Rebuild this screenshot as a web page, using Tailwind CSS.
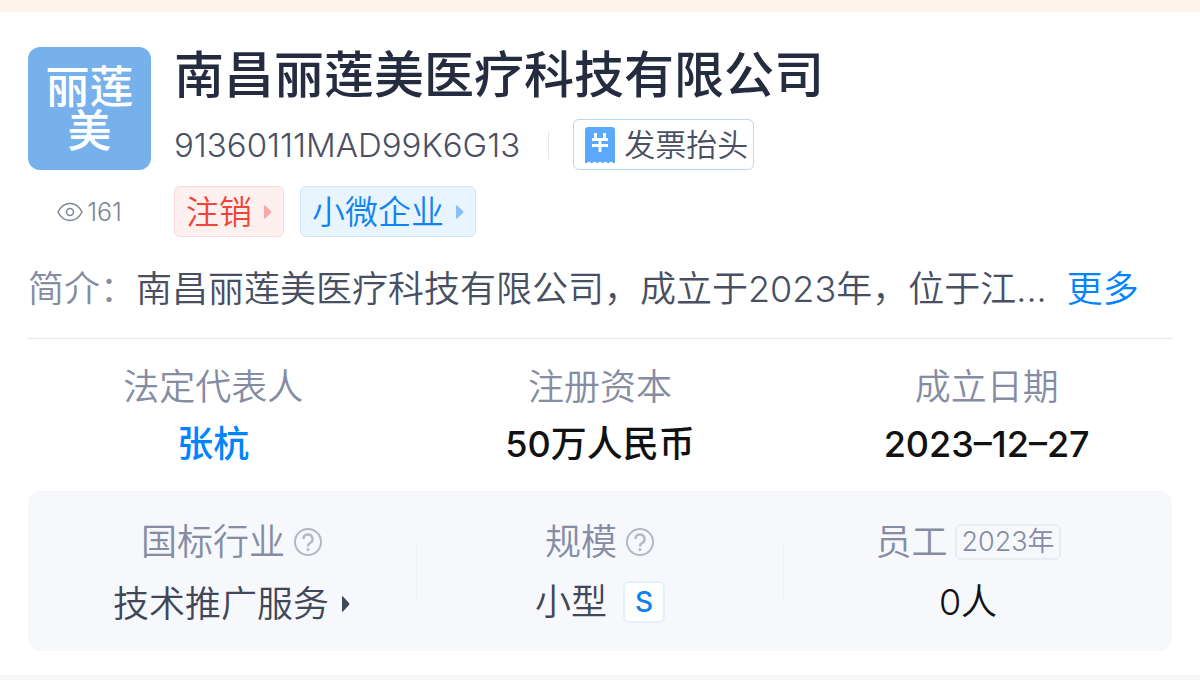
<!DOCTYPE html>
<html lang="zh-CN">
  <head>
    <meta charset="UTF-8" />
    <meta name="viewport" content="width=device-width, initial-scale=1.0" />
    <title>南昌丽莲美医疗科技有限公司</title>
    <script src="https://cdn.jsdelivr.net/npm/@tailwindcss/browser@4"></script>
  </head>
  <body class="min-h-screen bg-[#f7f7f8] font-['Inter','Noto_Sans_CJK_SC',sans-serif] font-[350]">
    <div class="h-3 bg-[#fff3ea]"></div>

    <main class="bg-white px-7 pt-[35px] pb-6">
      <!-- Company header -->
      <header class="flex gap-[23px]">
        <div class="flex shrink-0 flex-col items-center">
          <div
            class="flex size-[123px] items-center justify-center rounded-xl bg-[#76b1ec] px-4 text-center text-[44px] leading-[44px] font-medium text-white"
          >
            丽莲美
          </div>
          <div class="mt-6 flex items-center gap-1 text-[25px] leading-9 text-[#7d8596]">
            <svg class="h-5 w-[26px]" viewBox="0 0 26 20" fill="none" stroke="currentColor" stroke-width="1.5">
              <path d="M1 10C4 4 8.500 1.500 13 1.500S22 4 25 10C22 16 17.500 18.500 13 18.500S4 16 1 10Z" />
              <circle cx="13" cy="10" r="3.500" />
            </svg>
            <span>161</span>
          </div>
        </div>

        <div class="min-w-0">
          <h1 class="text-[50px] leading-[56px] font-medium text-[#262c3f]">
            南昌丽莲美医疗科技有限公司
          </h1>

          <div class="mt-4 flex items-center">
            <span class="text-[33px] leading-[50px] text-[#4a5062]">91360111MAD99K6G13</span>
            <span class="mr-6 ml-7 h-7 w-px bg-[#e6e8ee]"></span>
            <button
              type="button"
              class="flex h-[51px] items-center gap-2 rounded-md border border-[#b4daf5] pr-[5px] pl-[10px] text-[31px] font-[350] text-[#4a5062]"
            >
              <svg class="h-9 w-8" viewBox="0 0 32 36">
                <path
                  d="M4 0H28Q31 0 31 3V36H29A2.200 2.200 0 0 0 25 36H23.500A2.200 2.200 0 0 0 19.500 36H18A2.200 2.200 0 0 0 14 36H12.500A2.200 2.200 0 0 0 8.500 36H7A2.200 2.200 0 0 0 3 36H1V3Q1 0 4 0Z"
                  fill="#5aa9fb"
                />
                <path d="M11.500 6V12.500M20.500 6V12.500M8 12.500H24M8 18.500H24M16 12.500V25" fill="none" stroke="#fff" stroke-width="2.800" />
              </svg>
              <span class="pt-[2px]">发票抬头</span>
            </button>
          </div>

          <div class="mt-4 flex gap-4">
            <a href="#" class="flex h-[51px] items-center gap-3 rounded-md border border-[#fbd9da] bg-[#fff0f0] px-[11px] text-[33px] text-[#f04438]">
              <span class="pt-[2px]">注销</span>
              <svg class="h-[14px] w-2" viewBox="0 0 8 14" fill="#f7a8a8">
                <path d="M0 1Q0 0 1 .5L7 6Q8 7 7 8L1 13.500Q0 14 0 13Z" />
              </svg>
            </a>
            <a href="#" class="flex h-[51px] items-center gap-3 rounded-md border border-[#cfe6f8] bg-[#e8f4fe] px-[11px] text-[33px] text-[#0f84f0]">
              <span class="pt-[2px]">小微企业</span>
              <svg class="h-[14px] w-2" viewBox="0 0 8 14" fill="#83c1f7">
                <path d="M0 1Q0 0 1 .5L7 6Q8 7 7 8L1 13.500Q0 14 0 13Z" />
              </svg>
            </a>
          </div>
        </div>
      </header>

      <!-- Introduction -->
      <div class="mt-[26px] flex border-b border-[#e6e7ea] pb-[23px] text-[36px] leading-[52px] whitespace-nowrap">
        <span class="text-[#858ca3]">简介：</span>
        <p class="text-[#484f62]">南昌丽莲美医疗科技有限公司，成立于2023年，位于江...</p>
        <button type="button" class="ml-5 font-[350] text-[#0084ff]">更多</button>
      </div>

      <!-- Registration facts -->
      <dl class="-mx-2 mt-5 grid grid-cols-3 text-center text-[36px] leading-[57px]">
        <div>
          <dt class="text-[#858ca3]">法定代表人</dt>
          <dd class="font-medium"><a href="#" class="text-[#0084ff]">张杭</a></dd>
        </div>
        <div>
          <dt class="text-[#858ca3]">注册资本</dt>
          <dd class="font-medium text-[#111]">50万人民币</dd>
        </div>
        <div>
          <dt class="text-[#858ca3]">成立日期</dt>
          <dd class="font-medium text-[#111]">2023–12–27</dd>
        </div>
      </dl>

      <!-- Industry, size and staff -->
      <dl class="mt-[18px] grid grid-cols-3 rounded-xl bg-[#f6f8fc] px-5 pt-[21px] pb-[17px] text-[36px] leading-[60px]">
        <div>
          <dt class="flex items-center justify-center gap-2 text-[#858ca3]">
            国标行业
            <svg class="size-[30px]" viewBox="0 0 30 30" fill="none" stroke="#b4b8c2" stroke-width="2">
              <circle cx="15" cy="15" r="13" />
              <path d="M10.500 12A4.500 4.500 0 1 1 17 16Q15 17 15 19.500" stroke-width="2.500" />
              <circle cx="15" cy="22.500" r="1.500" fill="#b4b8c2" stroke="none" />
            </svg>
          </dt>
          <dd class="flex items-center justify-center gap-3 pt-[2px] text-[#3f4758]">
            技术推广服务
            <svg class="h-4 w-[10px]" viewBox="0 0 8 16" fill="currentColor">
              <path d="M0 1Q0 0 1 .5L7 7Q8 8 7 9L1 15.500Q0 16 0 15Z" />
            </svg>
          </dd>
        </div>
        <div class="relative">
          <span class="absolute top-8 left-0 h-14 w-px bg-[#edf0f5]"></span>
          <span class="absolute top-8 right-0 h-14 w-px bg-[#edf0f5]"></span>
          <dt class="flex items-center justify-center gap-2 text-[#858ca3]">
            规模
            <svg class="size-[30px]" viewBox="0 0 30 30" fill="none" stroke="#b4b8c2" stroke-width="2">
              <circle cx="15" cy="15" r="13" />
              <path d="M10.500 12A4.500 4.500 0 1 1 17 16Q15 17 15 19.500" stroke-width="2.500" />
              <circle cx="15" cy="22.500" r="1.500" fill="#b4b8c2" stroke="none" />
            </svg>
          </dt>
          <dd class="flex items-center justify-center gap-4 text-[#3f4758]">
            小型
            <span class="flex size-[42px] items-center justify-center rounded-md border-2 border-[#e3f1fd] bg-white text-[28px] font-medium text-[#0f80ec]">S</span>
          </dd>
        </div>
        <div>
          <dt class="flex items-center justify-center gap-2 text-[#858ca3]">
            员工
            <span class="rounded-md border-2 border-[#e9ecf3] px-1 text-[27px] leading-8">2023年</span>
          </dt>
          <dd class="text-center text-[#111]">0人</dd>
        </div>
      </dl>
    </main>
  </body>
</html>
